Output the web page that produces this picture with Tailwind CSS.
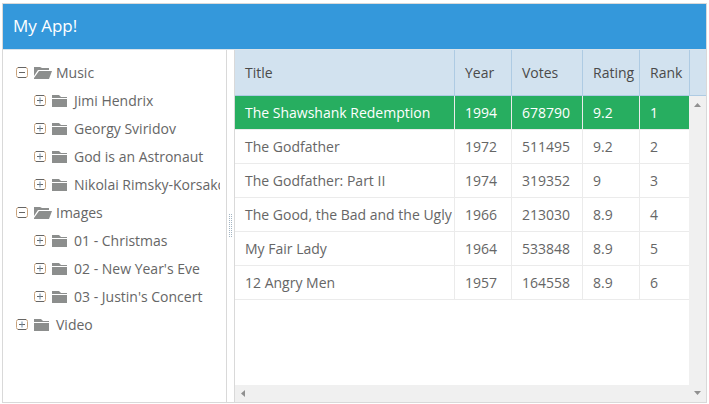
<!DOCTYPE html>
<html lang="en">
<head>
<meta charset="utf-8">
<title>My App!</title>
<script src="https://cdn.jsdelivr.net/npm/@tailwindcss/browser@4"></script>
</head>
<body class="flex h-screen bg-white pt-[3px] pr-[2px] pb-[1px] pl-[2px] font-['Open_Sans','Noto_Sans',sans-serif] text-sm text-[#666666]">
<svg class="hidden" aria-hidden="true">
  <symbol id="minus" viewBox="0 0 12 12"><rect x=".5" y=".5" width="11" height="10" rx="2" fill="none" stroke="#c9a37c"/><path d="M2 .5h8M2 10.500h8M3 5.500h6" stroke="#666"/></symbol>
  <symbol id="plus" viewBox="0 0 12 12"><rect x=".5" y=".5" width="11" height="10" rx="2" fill="none" stroke="#c9a37c"/><path d="M2 .5h8M2 10.500h8M3 5.500h6" stroke="#666"/><path d="M6 2.500v6" stroke="#6f8ca8"/></symbol>
  <symbol id="folder" viewBox="0 0 18 12"><path d="M0 0h7l2 2h6v1H0zM0 4h15v8H0z" fill="#8c8e8d"/></symbol>
  <symbol id="open" viewBox="0 0 18 12"><path d="M0 0h6l2 1h7v2H4L0 9zM5 4H18l-3 8H0v-1z" fill="#8c8e8d"/></symbol>
</svg>
<main class="flex min-w-0 flex-1 flex-col border border-[#d9d9d9]">
  <header class="flex h-[46px] shrink-0 items-center border-b border-[#d9e3ea] bg-[#3498db] px-2.5">
    <h1 class="text-[17px] text-white">My App!</h1>
  </header>
  <div class="flex min-h-0 flex-1">
    <nav aria-label="Library" class="w-56 shrink-0 overflow-hidden border-r border-[#d9d9d9] py-[9px] pr-1.5 pl-[13px]">
      <ul class="overflow-hidden whitespace-nowrap leading-7">
        <li>
          <div class="flex items-center"><button aria-label="Collapse Music" class="mr-1.5 shrink-0"><svg class="size-3"><use href="#minus"/></svg></button><svg class="mr-1 h-3 w-[18px] shrink-0"><use href="#open"/></svg><span>Music</span></div>
          <ul class="pl-[18px]">
            <li class="flex items-center"><button aria-label="Expand Jimi Hendrix" class="mr-1.5 shrink-0"><svg class="size-3"><use href="#plus"/></svg></button><svg class="mr-1 h-3 w-[18px] shrink-0"><use href="#folder"/></svg><span>Jimi Hendrix</span></li>
            <li class="flex items-center"><button aria-label="Expand Georgy Sviridov" class="mr-1.5 shrink-0"><svg class="size-3"><use href="#plus"/></svg></button><svg class="mr-1 h-3 w-[18px] shrink-0"><use href="#folder"/></svg><span>Georgy Sviridov</span></li>
            <li class="flex items-center"><button aria-label="Expand God is an Astronaut" class="mr-1.5 shrink-0"><svg class="size-3"><use href="#plus"/></svg></button><svg class="mr-1 h-3 w-[18px] shrink-0"><use href="#folder"/></svg><span>God is an Astronaut</span></li>
            <li class="flex items-center"><button aria-label="Expand Nikolai Rimsky-Korsakov" class="mr-1.5 shrink-0"><svg class="size-3"><use href="#plus"/></svg></button><svg class="mr-1 h-3 w-[18px] shrink-0"><use href="#folder"/></svg><span>Nikolai Rimsky-Korsakov</span></li>
          </ul>
        </li>
        <li>
          <div class="flex items-center"><button aria-label="Collapse Images" class="mr-1.5 shrink-0"><svg class="size-3"><use href="#minus"/></svg></button><svg class="mr-1 h-3 w-[18px] shrink-0"><use href="#open"/></svg><span>Images</span></div>
          <ul class="pl-[18px]">
            <li class="flex items-center"><button aria-label="Expand 01 - Christmas" class="mr-1.5 shrink-0"><svg class="size-3"><use href="#plus"/></svg></button><svg class="mr-1 h-3 w-[18px] shrink-0"><use href="#folder"/></svg><span>01 - Christmas</span></li>
            <li class="flex items-center"><button aria-label="Expand 02 - New Year's Eve" class="mr-1.5 shrink-0"><svg class="size-3"><use href="#plus"/></svg></button><svg class="mr-1 h-3 w-[18px] shrink-0"><use href="#folder"/></svg><span>02 - New Year's Eve</span></li>
            <li class="flex items-center"><button aria-label="Expand 03 - Justin's Concert" class="mr-1.5 shrink-0"><svg class="size-3"><use href="#plus"/></svg></button><svg class="mr-1 h-3 w-[18px] shrink-0"><use href="#folder"/></svg><span>03 - Justin's Concert</span></li>
          </ul>
        </li>
        <li class="flex items-center"><button aria-label="Expand Video" class="mr-1.5 shrink-0"><svg class="size-3"><use href="#plus"/></svg></button><svg class="mr-1 h-3 w-[18px] shrink-0"><use href="#folder"/></svg><span>Video</span></li>
      </ul>
    </nav>
    <div role="separator" aria-orientation="vertical" class="flex w-[7px] shrink-0 cursor-col-resize items-center justify-center">
      <svg class="h-6 w-[3px]" viewBox="0 0 3 24" aria-hidden="true"><path d="M.5 0v24M2.500 0v24" stroke="#a3b5c3" stroke-dasharray="1 1"/></svg>
    </div>
    <section aria-label="Films" class="flex min-w-0 flex-1 border-l border-[#d9d9d9]">
      <div class="flex min-w-0 flex-1 flex-col">
        <div class="min-h-0 flex-1 overflow-hidden">
          <table class="w-full table-fixed border-separate border-spacing-0 whitespace-nowrap text-left [&_td]:overflow-hidden [&_td]:border-r [&_td]:border-b [&_td]:border-[#ebebeb] [&_td]:p-0 [&_td]:pl-2.5 [&_td:last-child]:border-r-0 [&_th]:overflow-hidden [&_th]:border-r [&_th]:border-b [&_th]:border-[#aecbe3] [&_th]:p-0 [&_th]:pl-2.5 [&_th]:font-normal [&_th:last-child]:border-r-0">
            <colgroup><col><col class="w-[57px]"><col class="w-[71px]"><col class="w-[57px]"><col class="w-[49px]"></colgroup>
            <thead><tr class="h-[46px] bg-[#d2e2ef] text-[#4a4a4a]"><th scope="col">Title</th><th scope="col">Year</th><th scope="col">Votes</th><th scope="col">Rating</th><th scope="col">Rank</th></tr></thead>
            <tbody>
              <tr aria-selected="true" class="h-[34px] bg-[#27ae60] font-medium text-white"><td>The Shawshank Redemption</td><td>1994</td><td>678790</td><td>9.2</td><td>1</td></tr>
              <tr class="h-[34px]"><td>The Godfather</td><td>1972</td><td>511495</td><td>9.2</td><td>2</td></tr>
              <tr class="h-[34px]"><td>The Godfather: Part II</td><td>1974</td><td>319352</td><td>9</td><td>3</td></tr>
              <tr class="h-[34px]"><td>The Good, the Bad and the Ugly</td><td>1966</td><td>213030</td><td>8.9</td><td>4</td></tr>
              <tr class="h-[34px]"><td>My Fair Lady</td><td>1964</td><td>533848</td><td>8.9</td><td>5</td></tr>
              <tr class="h-[34px]"><td>12 Angry Men</td><td>1957</td><td>164558</td><td>8.9</td><td>6</td></tr>
            </tbody>
          </table>
        </div>
        <div class="flex h-[17px] shrink-0 items-center bg-[#f0f0f0] pl-1.5">
          <button aria-label="Scroll left"><svg class="h-[7px] w-1" viewBox="0 0 4 7"><path d="M4 0v7L0 3.500z" fill="#909090"/></svg></button>
        </div>
      </div>
      <div class="flex w-[17px] shrink-0 flex-col">
        <div class="h-[46px] shrink-0 border-b border-l border-[#aecbe3] bg-[#d2e2ef]"></div>
        <div class="flex flex-1 flex-col items-center justify-between bg-[#f0f0f0] py-[7px]">
          <button aria-label="Scroll up"><svg class="h-1 w-[7px]" viewBox="0 0 7 4"><path d="M0 4h7L3.500 0z" fill="#909090"/></svg></button>
          <button aria-label="Scroll down"><svg class="h-1 w-[7px]" viewBox="0 0 7 4"><path d="M0 0h7L3.500 4z" fill="#909090"/></svg></button>
        </div>
      </div>
    </section>
  </div>
</main>
</body>
</html>
